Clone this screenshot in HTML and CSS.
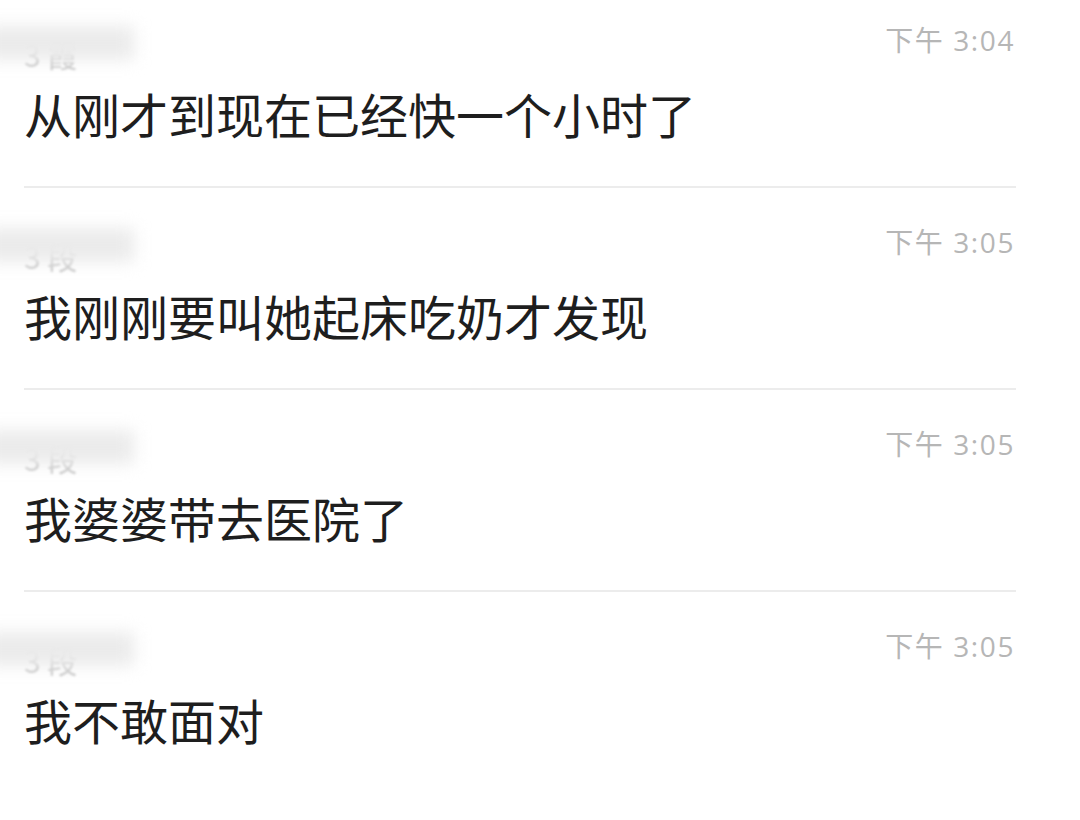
FILE: index.html
```html
<!DOCTYPE html>
<html lang="zh-CN">
<head>
  <meta charset="UTF-8" />
  <meta name="viewport" content="width=device-width, initial-scale=1" />
  <title>消息</title>
  <link rel="stylesheet" href="styles.css">
</head>
<body>

  <div class="chat-list">
    <div class="chat-item">
      <div class="item-head">
        <span class="item-name">3 霞</span>
        <span class="item-time">下午 3:04</span>
      </div>
      <div class="item-msg">从刚才到现在已经快一个小时了</div>
    </div>

    <div class="chat-item">
      <div class="item-head">
        <span class="item-name">3 段</span>
        <span class="item-time">下午 3:05</span>
      </div>
      <div class="item-msg">我刚刚要叫她起床吃奶才发现</div>
    </div>

    <div class="chat-item">
      <div class="item-head">
        <span class="item-name">3 段</span>
        <span class="item-time">下午 3:05</span>
      </div>
      <div class="item-msg">我婆婆带去医院了</div>
    </div>

    <div class="chat-item">
      <div class="item-head">
        <span class="item-name">3 段</span>
        <span class="item-time">下午 3:05</span>
      </div>
      <div class="item-msg">我不敢面对</div>
    </div>
  </div>

</body>
</html>
```

FILE: styles.css
```css
body {
  font-family: 'Noto Sans CJK SC', 'Noto Sans', sans-serif;
  background: #fff;
  color: #222;
  margin: 0;
  overflow: hidden;
}
.chat-list {
  margin-top: -14px;
}
.chat-item {
  position: relative;
  margin: 0 64px 0 24px;
  padding: 34px 0 42px;
  border-bottom: 2px solid #ececec;
}
.chat-item:last-child {
  border-bottom: none;
}
.item-head {
  display: flex;
  justify-content: space-between;
  height: 40px;
  line-height: 40px;
}
.item-name {
  position: relative;
  top: 14px;
  font-size: 30px;
  color: #c6c6c6;
  filter: blur(1px);
}
/* mancha gris que tapa el nombre */
.item-name::before {
  content: '';
  position: absolute;
  left: -40px;
  top: -8px;
  width: 150px;
  height: 34px;
  background: #ebebeb;
  filter: blur(8px);
}
.item-time {
  font-family: 'Open Sans', 'Noto Sans CJK SC', sans-serif;
  font-size: 28px;
  letter-spacing: 1.6px;
  color: #b6b6b6;
  margin-right: 1px;
}
.item-msg {
  margin-top: 22px;
  font-size: 48px;
  line-height: 62px;
  color: #1e1e1e;
}
```
